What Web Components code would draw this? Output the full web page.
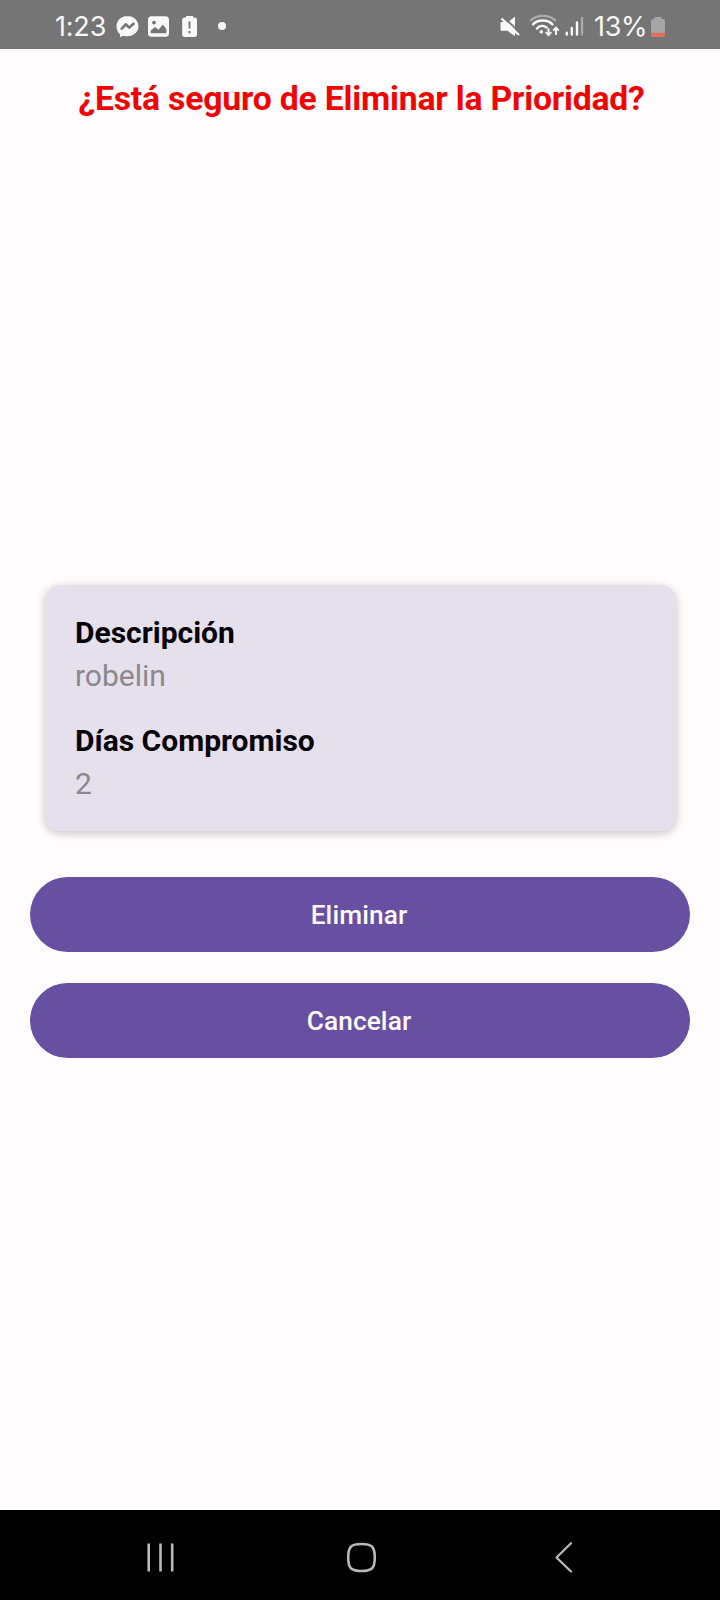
<!DOCTYPE html>
<html lang="es">
<head>
<meta charset="utf-8">
<title>Eliminar Prioridad</title>
<style>
html,body{margin:0;height:100%;background:#fffcfe}
body{font-family:Roboto,"Noto Sans",sans-serif}
</style>
</head>
<body>
<delete-screen></delete-screen>
<script>
const define = (name, html) => customElements.define(name, class extends HTMLElement {
  constructor() {
    super();
    const t = document.createElement('template');
    t.innerHTML = html;
    this.attachShadow({mode: 'open'}).append(t.content.cloneNode(true));
  }
});

define('status-bar', `
<style>
:host{display:flex;justify-content:space-between;height:49px;background:#757575;color:#f8f8f8;box-sizing:border-box;padding:0 54px 0 55px}
div{display:flex;align-items:center}
span{font:400 27px/49px Inter,Roboto,sans-serif;padding-top:2px;box-sizing:border-box;height:49px;white-space:nowrap}
.time{width:61px;letter-spacing:-.2px}
.pct{letter-spacing:-.3px;width:55px}
svg{display:block;flex:none}
</style>
<div>
  <span class="time">1:23</span>
  <svg width="120" height="49" viewBox="116 0 120 49">
    <path fill="#f8f8f8" d="M127.500 16c-6.300 0-11 4.600-11 10.400 0 3.300 1.300 6 3.600 7.900v3l3-1.600c1.400.4 2.800.6 4.400.6 6.300 0 10.900-4.400 10.900-10s-4.600-10.300-10.900-10.300z"/>
    <path d="M121 29.500l4.700-5.200 3.600 3.300 5-4.600" fill="none" stroke="#757575" stroke-width="2.600" stroke-linejoin="round"/>
    <rect x="148" y="16.200" width="21" height="20.600" rx="3.600" fill="#f8f8f8"/>
    <circle cx="154" cy="22.600" r="1.900" fill="#757575"/>
    <path d="M150.800 33.200v-2.600l4.300-3.600 3.400 2.800 4.300-5.300 3.600 4.500v4.200z" fill="#757575"/>
    <path fill="#f8f8f8" d="M186 16h7v1.500h1.600c1.600 0 2.400.9 2.400 2.400v14.500c0 1.600-.9 2.500-2.500 2.500h-9.800c-1.600 0-2.500-.9-2.500-2.500v-14.500c0-1.500.8-2.400 2.400-2.400h1.400z"/>
    <path d="M189.500 21.500v7M189.500 31v2.200" stroke="#757575" stroke-width="1.900"/>
    <circle cx="222" cy="26" r="4" fill="#f8f8f8"/>
  </svg>
</div>
<div>
  <svg width="95" height="49" viewBox="499 0 95 49">
    <path fill="#f8f8f8" d="M515 16.500v16l-8-9.500zM501.500 22h4l9.500 9v5.200l-7.500-5.400h-6q-1 0-1-1.300v-6.200q0-1.300 1-1.300z"/>
    <path d="M503.500 17l17 16.200" stroke="#757575" stroke-width="1.800"/>
    <path d="M501.500 18.500l17.500 16.500" stroke="#f8f8f8" stroke-width="2.300"/>
    <g fill="none" stroke="#f8f8f8" stroke-linecap="round" stroke-width="2.400">
      <path d="M531 20c7-5.500 17-5.500 24 0" opacity=".42"/>
      <path d="M533 24.300c5-5 14.500-5 19.500 0M537 28.500c2.500-3 6.500-3.200 9.500-1"/>
    </g>
    <circle cx="541.300" cy="31.800" r="1.800" fill="#f8f8f8"/>
    <path d="M548.500 28.300v6.500M545.700 32.200l2.800 3 2.800-3M556 35v-6.800M553.200 30.700l2.800-3 2.800 3" fill="none" stroke="#f8f8f8" stroke-width="1.900"/>
    <g stroke="#f8f8f8" stroke-width="2.400" stroke-linecap="round">
      <path d="M566.800 32.600v2M571.800 28v6.600M577 22.500v12.100"/><path d="M582 18v16.600" opacity=".4"/>
    </g>
  </svg>
  <span class="pct">13%</span>
  <svg width="17" height="49" viewBox="649 0 17 49">
    <path fill="#a6a6a6" d="M654.500 17h7v2h1.500q2 0 2 2.500v13q0 2.500-2.500 2.500h-9q-2.500 0-2.500-2.500v-13q0-2.500 2-2.500h1.500z"/>
    <path fill="#e0705f" d="M651 32.700h14v1.800q0 2.500-2.500 2.500h-9q-2.500 0-2.500-2.500z"/>
  </svg>
</div>`);

define('screen-title', `
<style>
:host{display:block;text-align:center;color:#f00505;font-weight:700;font-size:33.750px;line-height:44px;letter-spacing:-.2px;padding-left:3px;white-space:nowrap}
</style><slot></slot>`);

define('info-card', `
<style>
:host{display:flex;flex-direction:column;gap:22px;box-sizing:border-box;height:246px;margin:0 44.500px;padding:26px 30.500px;border-radius:15px;background:#e6e0ec;box-shadow:0 3px 8px rgba(0,0,0,.16),0 1px 12px rgba(0,0,0,.08)}
</style><slot></slot>`);

define('info-field', `
<style>
:host{display:block;font-size:30px;line-height:43px;color:#8b888e}
b{display:block;color:#050208;font-weight:700}
</style><b><slot name="label"></slot></b><slot></slot>`);

define('pill-button', `
<style>
:host{display:block}
button{display:block;width:100%;height:75px;margin:0;padding:1px 0 0;border:0;border-radius:38px;background:#6750a2;color:#fffafe;font:500 26.250px/74px Roboto,sans-serif;letter-spacing:.1px;text-indent:-2px}
</style><button><slot></slot></button>`);

define('nav-bar', `
<style>
:host{display:flex;justify-content:space-between;align-items:center;height:90px;background:#000;padding:4px 142px 0 144px;box-sizing:border-box}
svg{display:block;fill:none;stroke:#b9b9b9;stroke-width:2.600;stroke-linecap:round;stroke-linejoin:round}
</style>
<svg width="34" height="34" viewBox="144 1540 34 34"><path stroke-linecap="butt" d="M148.700 1543.500v28M160.500 1543.500v28M172.200 1543.500v28"/></svg>
<svg width="34" height="34" viewBox="344 1540 34 34"><path d="M361.500 1544c10.500 0 13.300 2.800 13.300 13.500s-2.800 13.500-13.300 13.500-13.300-2.800-13.300-13.500 2.800-13.500 13.300-13.500z"/></svg>
<svg width="34" height="34" viewBox="544 1540 34 34"><path stroke-width="2.300" d="M571 1543.300l-14.500 14.200 14.500 14"/></svg>`);

define('delete-screen', `
<style>
:host{display:flex;flex-direction:column;height:1600px;width:720px;overflow:hidden}
screen-title{padding-top:28px}
main{flex:1;display:flex;flex-direction:column}
info-card{margin-top:464px}
.actions{display:flex;flex-direction:column;gap:31px;padding:46px 30px 0}
</style>
<status-bar></status-bar>
<main>
  <screen-title>¿Está seguro de Eliminar la Prioridad?</screen-title>
  <info-card>
    <info-field><span slot="label">Descripción</span>robelin</info-field>
    <info-field><span slot="label">Días Compromiso</span>2</info-field>
  </info-card>
  <div class="actions">
    <pill-button>Eliminar</pill-button>
    <pill-button>Cancelar</pill-button>
  </div>
</main>
<nav-bar></nav-bar>`);
</script>
</body>
</html>
